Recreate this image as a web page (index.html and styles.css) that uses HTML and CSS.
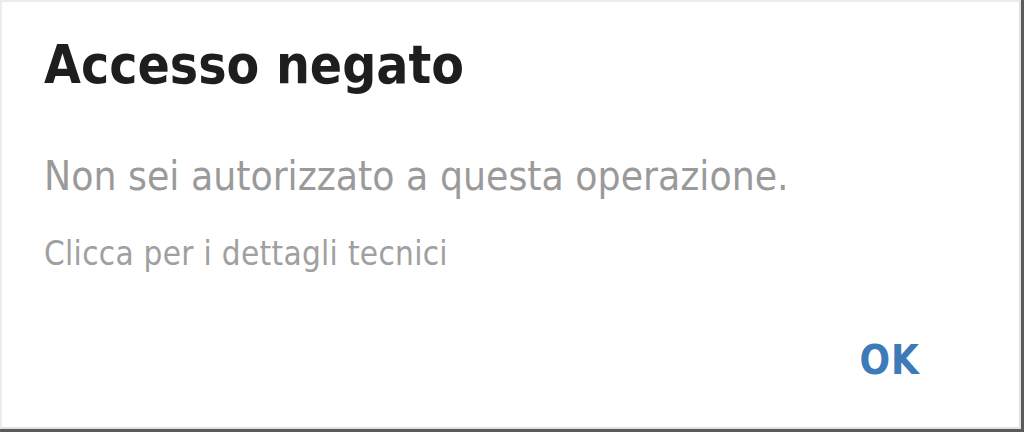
FILE: index.html
```html
<!DOCTYPE html>
<html lang="it">
<head>
<meta charset="utf-8">
<title>Accesso negato</title>
<link rel="stylesheet" href="styles.css">
</head>
<body>
<div class="frame">
  <div class="dialog">
    <h1 class="title">Accesso negato</h1>
    <p class="message">Non sei autorizzato a questa operazione.</p>
    <p class="details">Clicca per i dettagli tecnici</p>
    <div class="actions">
      <button class="ok">OK</button>
    </div>
  </div>
</div>
</body>
</html>
```
FILE: styles.css
```css
html, body {
  margin: 0;
  padding: 0;
  background: #ffffff;
}
.frame {
  width: 1024px;
  height: 432px;
  box-sizing: border-box;
  border-right: 3px solid #5b5b5b;
  border-bottom: 3px solid #5b5b5b;
  background: #ffffff;
}
.dialog {
  height: 100%;
  box-sizing: border-box;
  border-top: 2px solid #ececec;
  border-left: 2px solid #ececec;
  border-right: 2px solid #e2e2e2;
  border-bottom: 2px solid #e2e2e2;
  padding: 0 0 0 42px;
  display: flex;
  flex-direction: column;
  font-family: "DejaVu Sans Condensed", "DejaVu Sans", sans-serif;
}
.title {
  margin: 32px 0 0 0;
  font-size: 53px;
  line-height: 62px;
  font-weight: bold;
  color: #1e1e1e;
}
.message {
  margin: 57px 0 0 0;
  font-size: 40.4px;
  line-height: 46px;
  color: #9a9a9a;
}
.details {
  margin: 36px 0 0 0;
  font-size: 33px;
  line-height: 38px;
  color: #a0a0a0;
  letter-spacing: 0.3px;
}
.actions {
  display: flex;
  justify-content: flex-end;
  margin-top: auto;
  padding: 0 99px 44px 0;
}
.ok {
  border: none;
  background: none;
  padding: 0;
  font-family: "DejaVu Sans Condensed", "DejaVu Sans", sans-serif;
  font-size: 40px;
  font-weight: bold;
  letter-spacing: 1px;
  color: #3d7ab8;
}
```
